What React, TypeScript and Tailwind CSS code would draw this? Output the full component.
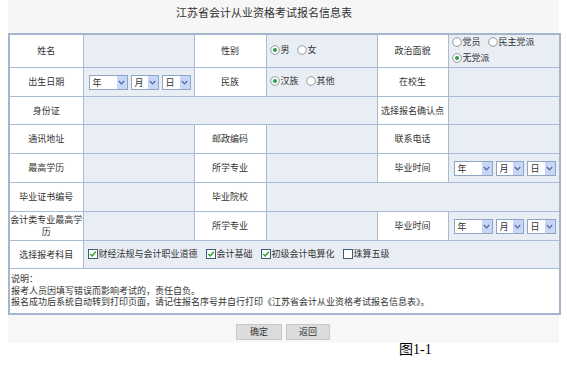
import React from "react";

const font = { fontFamily: '"Noto Sans CJK SC", "Noto Sans", sans-serif' };

function Radio({ on, label }: { on?: boolean; label: string }) {
  return (
    <span className="inline-flex items-center mr-[7px]">
      <svg width="10" height="10" viewBox="0 0 10 10" className="mr-[1px]">
        <circle cx="5" cy="5" r="4.3" fill="#fff" stroke="#8a9099" strokeWidth="0.9" />
        {on && <circle cx="5" cy="5" r="2" fill="#2f9e44" />}
      </svg>
      {label}
    </span>
  );
}

function Check({ label, on = true }: { label: string; on?: boolean }) {
  return (
    <span className="inline-flex items-center mr-[8px]">
      <svg width="10" height="10" viewBox="0 0 10 10" className="mr-[1px]">
        <rect x="0.5" y="0.5" width="9" height="9" fill="#fff" stroke="#3b5b7a" strokeWidth="1" />
        {on && <path d="M2.3 5 L4.2 7 L7.8 2.8" fill="none" stroke="#27a327" strokeWidth="1.4" />}
      </svg>
      {label}
    </span>
  );
}

function Select({ text, w }: { text: string; w: string }) {
  return (
    <span className={`inline-flex items-center h-[15px] bg-white border border-[#8ea5c4] mr-[3px] ${w}`}>
      <span className="flex-1 pl-[3px] leading-none">{text}</span>
      <span className="w-[10px] h-full bg-[#c8d7f5] flex items-center justify-center">
        <svg width="7" height="5" viewBox="0 0 7 5">
          <path d="M0.8 1 L3.5 3.8 L6.2 1" fill="none" stroke="#4a67a8" strokeWidth="1.2" />
        </svg>
      </span>
    </span>
  );
}

function DateSel() {
  return (
    <div className="flex items-center pl-[5px]">
      <Select text="年" w="w-[39px]" />
      <Select text="月" w="w-[28px]" />
      <Select text="日" w="w-[29px]" />
    </div>
  );
}

const L = "bg-white border border-[#a9bcd3] text-center align-middle leading-[12px] px-0";
const V = "bg-[#e9eef5] border border-[#a9bcd3] align-middle";

export default function App() {
  return (
    <div className="w-[567px] h-[365px] bg-white text-[9px] text-[#333]" style={font}>
      <div className="mx-[8px] h-[33px] bg-[#f6f6f6] pl-[168px] pt-[4px] text-[11px] text-[#333]">
        江苏省会计从业资格考试报名信息表
      </div>
      <table className="ml-[8px] w-[551px] table-fixed border-collapse border-2 border-[#a2b6ce]">
        <colgroup>
          <col className="w-[74px]" />
          <col className="w-[111px]" />
          <col className="w-[72px]" />
          <col className="w-[111px]" />
          <col className="w-[71px]" />
          <col className="w-[112px]" />
        </colgroup>
        <tbody>
          <tr className="h-[30px]">
            <td className={L}>姓名</td>
            <td className={V}></td>
            <td className={L}>性别</td>
            <td className={`${V} pl-[3px]`}>
              <Radio on label="男" />
              <Radio label="女" />
            </td>
            <td className={L}>政治面貌</td>
            <td className={`${V} pl-[3px] leading-[14px]`}>
              <div>
                <Radio label="党员" />
                <Radio label="民主党派" />
              </div>
              <div>
                <Radio on label="无党派" />
              </div>
            </td>
          </tr>
          <tr className="h-[29px]">
            <td className={L}>出生日期</td>
            <td className={V}>
              <DateSel />
            </td>
            <td className={L}>民族</td>
            <td className={`${V} pl-[3px]`}>
              <Radio on label="汉族" />
              <Radio label="其他" />
            </td>
            <td className={L}>在校生</td>
            <td className={V}></td>
          </tr>
          <tr className="h-[28px]">
            <td className={L}>身份证</td>
            <td className={V} colSpan={3}></td>
            <td className={L}>选择报名确认点</td>
            <td className={V}></td>
          </tr>
          <tr className="h-[29px]">
            <td className={L}>通讯地址</td>
            <td className={V}></td>
            <td className={L}>邮政编码</td>
            <td className={V}></td>
            <td className={L}>联系电话</td>
            <td className={V}></td>
          </tr>
          <tr className="h-[29px]">
            <td className={L}>最高学历</td>
            <td className={V}></td>
            <td className={L}>所学专业</td>
            <td className={V}></td>
            <td className={L}>毕业时间</td>
            <td className={V}>
              <DateSel />
            </td>
          </tr>
          <tr className="h-[29px]">
            <td className={L}>毕业证书编号</td>
            <td className={V}></td>
            <td className={L}>毕业院校</td>
            <td className={V} colSpan={3}></td>
          </tr>
          <tr className="h-[29px]">
            <td className={L}>
              会计类专业最高学
              <br />历
            </td>
            <td className={V}></td>
            <td className={L}>所学专业</td>
            <td className={V}></td>
            <td className={L}>毕业时间</td>
            <td className={V}>
              <DateSel />
            </td>
          </tr>
          <tr className="h-[28px]">
            <td className={L}>选择报考科目</td>
            <td className={`${V} pl-[4px]`} colSpan={5}>
              <Check label="财经法规与会计职业道德" />
              <Check label="会计基础" />
              <Check label="初级会计电算化" />
              <Check label="珠算五级" on={false} />
            </td>
          </tr>
          <tr className="h-[45px]">
            <td className="bg-white border border-[#a9bcd3] align-top pt-[4px] pl-[1px] leading-[11.5px]" colSpan={6}>
              <div>说明：</div>
              <div>报考人员因填写错误而影响考试的，责任自负。</div>
              <div>报名成功后系统自动转到打印页面，请记住报名序号并自行打印《江苏省会计从业资格考试报名信息表》。</div>
            </td>
          </tr>
        </tbody>
      </table>
      <div className="mx-[8px] h-[28px] bg-[#f7f7f7] flex items-start pt-[9px] pl-[228px] gap-[4px]">
        <button className="w-[46px] h-[16px] bg-[#dcdcdc] border border-[#c8c8c8] text-[9px] text-[#333] leading-none">
          确定
        </button>
        <button className="w-[44px] h-[16px] bg-[#dcdcdc] border border-[#c8c8c8] text-[9px] text-[#333] leading-none">
          返回
        </button>
      </div>
      <div
        className="pl-[399px] text-[14px] leading-[14px] text-black"
        style={{ fontFamily: '"Liberation Serif", "Noto Sans CJK SC", serif' }}
      >
        图1-1
      </div>
    </div>
  );
}
